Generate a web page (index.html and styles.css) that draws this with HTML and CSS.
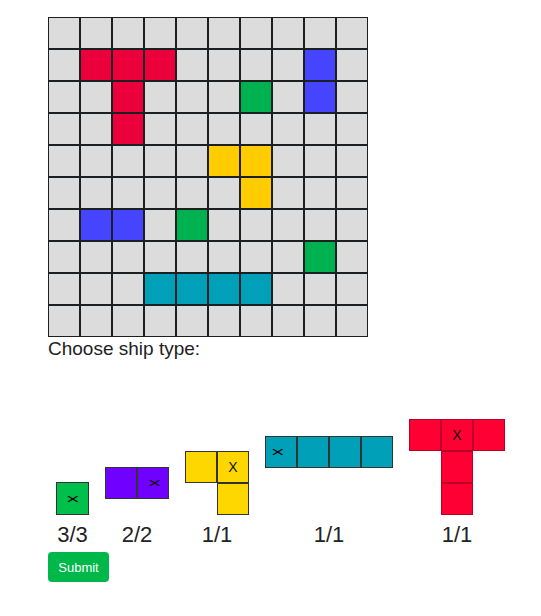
FILE: index.html
```html
<!DOCTYPE html>
<html lang="en">
<head>
    <meta charset="UTF-8">
    <meta name="viewport" content="width=device-width, initial-scale=1.0">
    <link rel="stylesheet" href="styles.css">
    <title>Battleship</title>
</head>
<body>
    <div id="game">
        <div id="board"></div>

        <p class="choose-label">Choose ship type:</p>

        <div id="ship-picker">
            <div class="ship-option">
                <div class="ship ship-single">
                    <div class="piece green"><span class="mark turned">×</span></div>
                </div>
                <div class="ship-count">3/3</div>
            </div>
            <div class="ship-option">
                <div class="ship ship-double">
                    <div class="piece purple"></div>
                    <div class="piece purple"><span class="mark turned">×</span></div>
                </div>
                <div class="ship-count">2/2</div>
            </div>
            <div class="ship-option">
                <div class="ship ship-corner">
                    <div class="piece yellow"></div>
                    <div class="piece yellow"><span class="mark">X</span></div>
                    <div class="piece empty"></div>
                    <div class="piece yellow"></div>
                </div>
                <div class="ship-count">1/1</div>
            </div>
            <div class="ship-option">
                <div class="ship ship-long">
                    <div class="piece teal"><span class="mark turned">×</span></div>
                    <div class="piece teal"></div>
                    <div class="piece teal"></div>
                    <div class="piece teal"></div>
                </div>
                <div class="ship-count">1/1</div>
            </div>
            <div class="ship-option">
                <div class="ship ship-tee">
                    <div class="piece red"></div>
                    <div class="piece red"><span class="mark">X</span></div>
                    <div class="piece red"></div>
                    <div class="piece empty"></div>
                    <div class="piece red"></div>
                    <div class="piece empty"></div>
                    <div class="piece empty"></div>
                    <div class="piece red"></div>
                    <div class="piece empty"></div>
                </div>
                <div class="ship-count">1/1</div>
            </div>
        </div>

        <button id="submit-button">Submit</button>
    </div>

    <script>
        const board = document.getElementById('board');

        // ships already placed: row, col, colour
        const placed = [
            [1, 1, 'red'], [1, 2, 'red'], [1, 3, 'red'], [2, 2, 'red'], [3, 2, 'red'],
            [1, 8, 'blue'], [2, 8, 'blue'],
            [2, 6, 'green'], [6, 4, 'green'], [7, 8, 'green'],
            [4, 5, 'yellow'], [4, 6, 'yellow'], [5, 6, 'yellow'],
            [6, 1, 'blue'], [6, 2, 'blue'],
            [8, 3, 'teal'], [8, 4, 'teal'], [8, 5, 'teal'], [8, 6, 'teal']
        ];

        for (let row = 0; row < 10; row++) {
            for (let col = 0; col < 10; col++) {
                const cell = document.createElement('div');
                cell.classList.add('cell');
                const hit = placed.find(p => p[0] === row && p[1] === col);
                if (hit) {
                    cell.classList.add('cell-' + hit[2]);
                }
                board.appendChild(cell);
            }
        }
    </script>
</body>
</html>
```

FILE: styles.css
```css
body {
    margin: 8px;
    font-family: "Liberation Sans", Arial, sans-serif;
    color: #222;
    background-color: #fff;
}

#game {
    padding: 9px 0 0 40px;
}

#board {
    display: grid;
    grid-template-columns: repeat(10, 32px);
    grid-auto-rows: 32px;
    width: 320px;
}

.cell {
    box-sizing: border-box;
    border: 1px solid #1c1f22;
    background-color: #dcdcdc;
}

.cell-red { background-color: #eb003c; }
.cell-blue { background-color: #4545ff; }
.cell-green { background-color: #00b24f; }
.cell-yellow { background-color: #ffcc00; }
.cell-teal { background-color: #00a0b8; }

.choose-label {
    margin: 1px 0 0;
    font-size: 19px;
    line-height: 22px;
}

#ship-picker {
    display: flex;
    align-items: flex-end;
    gap: 16px;
    margin-top: 59px;
    padding-left: 8px;
}

.ship-option {
    display: flex;
    flex-direction: column;
    align-items: center;
}

.ship {
    display: grid;
    grid-auto-rows: 32px;
}

.ship-single { grid-template-columns: 33px; grid-auto-rows: 33px; }
.ship-double { grid-template-columns: repeat(2, 32px); margin-bottom: 16px; }
.ship-corner { grid-template-columns: repeat(2, 32px); }
.ship-long { grid-template-columns: repeat(4, 32px); margin-bottom: 47px; }
.ship-tee { grid-template-columns: repeat(3, 32px); }

.piece {
    box-sizing: border-box;
    border: 1px solid #333;
    display: flex;
    align-items: center;
    justify-content: center;
    font-size: 14px;
    color: #111;
}

.piece.empty {
    border: none;
}

.green { background-color: #00c04b; }
.purple { background-color: #7000ff; }
.yellow { background-color: #ffd700; }
.teal { background-color: #00a0b8; }
.red { background-color: #ff0033; border-color: #b8002a; }

.mark {
    display: inline-block;
    line-height: 1;
}

.turned {
    transform: scale(1.2, 0.7);
    font-size: 20px;
}

.ship-long .piece .mark {
    margin-right: 6px;
}

.ship-double .piece .mark {
    margin-left: 4px;
}

.ship-count {
    margin-top: 7px;
    font-size: 22px;
    line-height: 25px;
}

#submit-button {
    display: block;
    margin-top: 5px;
    width: 61px;
    height: 30px;
    padding: 0;
    border: none;
    border-radius: 4px;
    background-color: #00b74a;
    color: #fff;
    font-family: "Liberation Sans", Arial, sans-serif;
    font-size: 13px;
    cursor: pointer;
}
```
